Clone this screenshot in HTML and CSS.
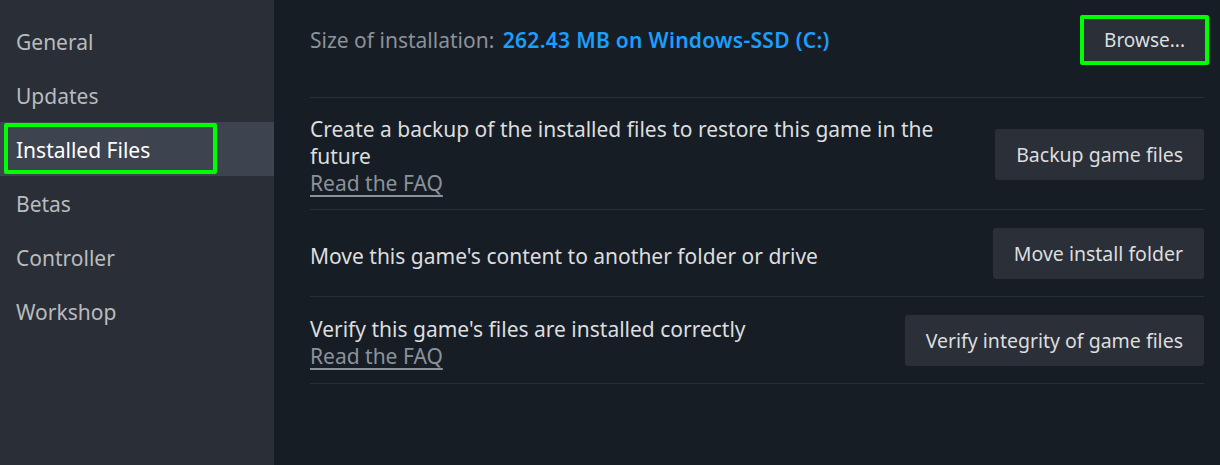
FILE: index.html
```html
<!DOCTYPE html>
<html lang="en">
  <head>
    <meta charset="UTF-8" />
    <meta name="viewport" content="width=device-width, initial-scale=1.0" />
    <title>Installed Files</title>
    <link rel="stylesheet" href="styles.css">
  </head>
  <body>
    <div class="settings">
      <nav class="sidebar">
        <div class="nav-item">General</div>
        <div class="nav-item">Updates</div>
        <div class="nav-item active">
          Installed Files
          <span class="highlight highlight-nav"></span>
        </div>
        <div class="nav-item">Betas</div>
        <div class="nav-item">Controller</div>
        <div class="nav-item">Workshop</div>
      </nav>

      <main class="content">
        <div class="row row-size">
          <div class="size-text">
            <span class="label">Size of installation:</span>
            <span class="value">262.43 MB on Windows-SSD (C:)</span>
          </div>
          <button class="btn btn-browse">
            Browse...
            <span class="highlight highlight-btn"></span>
          </button>
        </div>

        <div class="row">
          <div class="desc">
            <div>Create a backup of the installed files to restore this game in the future</div>
            <a class="faq" href="#">Read the FAQ</a>
          </div>
          <button class="btn">Backup game files</button>
        </div>

        <div class="row">
          <div class="desc">
            <div>Move this game's content to another folder or drive</div>
          </div>
          <button class="btn">Move install folder</button>
        </div>

        <div class="row">
          <div class="desc">
            <div>Verify this game's files are installed correctly</div>
            <a class="faq" href="#">Read the FAQ</a>
          </div>
          <button class="btn">Verify integrity of game files</button>
        </div>
      </main>
    </div>
  </body>
</html>
```

FILE: styles.css
```css
html,
body {
  margin: 0;
  height: 100%;
}
body {
  font-family: "Noto Sans", "Open Sans", sans-serif;
  font-size: 21px;
  background-color: #171d25;
  color: #dcdedf;
}
.settings {
  display: flex;
  height: 100%;
}

.sidebar {
  width: 274px;
  flex-shrink: 0;
  background-color: #2a2e36;
  padding-top: 14px;
  box-sizing: border-box;
}
.nav-item {
  position: relative;
  height: 54px;
  line-height: 56px;
  padding-left: 16px;
  color: #b8bcbf;
}
.nav-item.active {
  background-color: #3d4450;
  color: #ffffff;
}

.highlight {
  position: absolute;
  border: 4px solid #00ff00;
  border-radius: 2px;
  pointer-events: none;
}
.highlight-nav {
  left: 4px;
  top: 1px;
  width: 205px;
  height: 43px;
}
.highlight-btn {
  left: -4px;
  top: -4px;
  right: -4px;
  bottom: -4px;
}

.content {
  flex: 1;
  padding: 0 16px 0 36px;
}
.row {
  display: flex;
  align-items: center;
  justify-content: space-between;
  gap: 40px;
  padding: 18px 0 17px;
  border-bottom: 1px solid #2a2f38;
}
.row-size {
  padding: 19px 0 36px;
}
.label {
  color: #8b929a;
}
.value {
  color: #1a9fff;
  font-weight: 600;
  letter-spacing: 0.3px;
  margin-left: 3px;
}
.desc {
  max-width: 640px;
  line-height: 27px;
  margin-bottom: -5px;
}
.faq {
  color: #8b929a;
  text-decoration: underline;
  text-underline-offset: 4px;
}

.btn {
  position: relative;
  flex-shrink: 0;
  font-family: inherit;
  font-size: 19.5px;
  color: #dcdedf;
  background-color: #2a2f38;
  border: none;
  border-radius: 3px;
  height: 51px;
  padding: 0 21px;
  cursor: pointer;
}
.btn-browse {
  font-size: 19px;
  height: 42px;
  padding: 0 20px;
  margin-right: -1px;
}
```
